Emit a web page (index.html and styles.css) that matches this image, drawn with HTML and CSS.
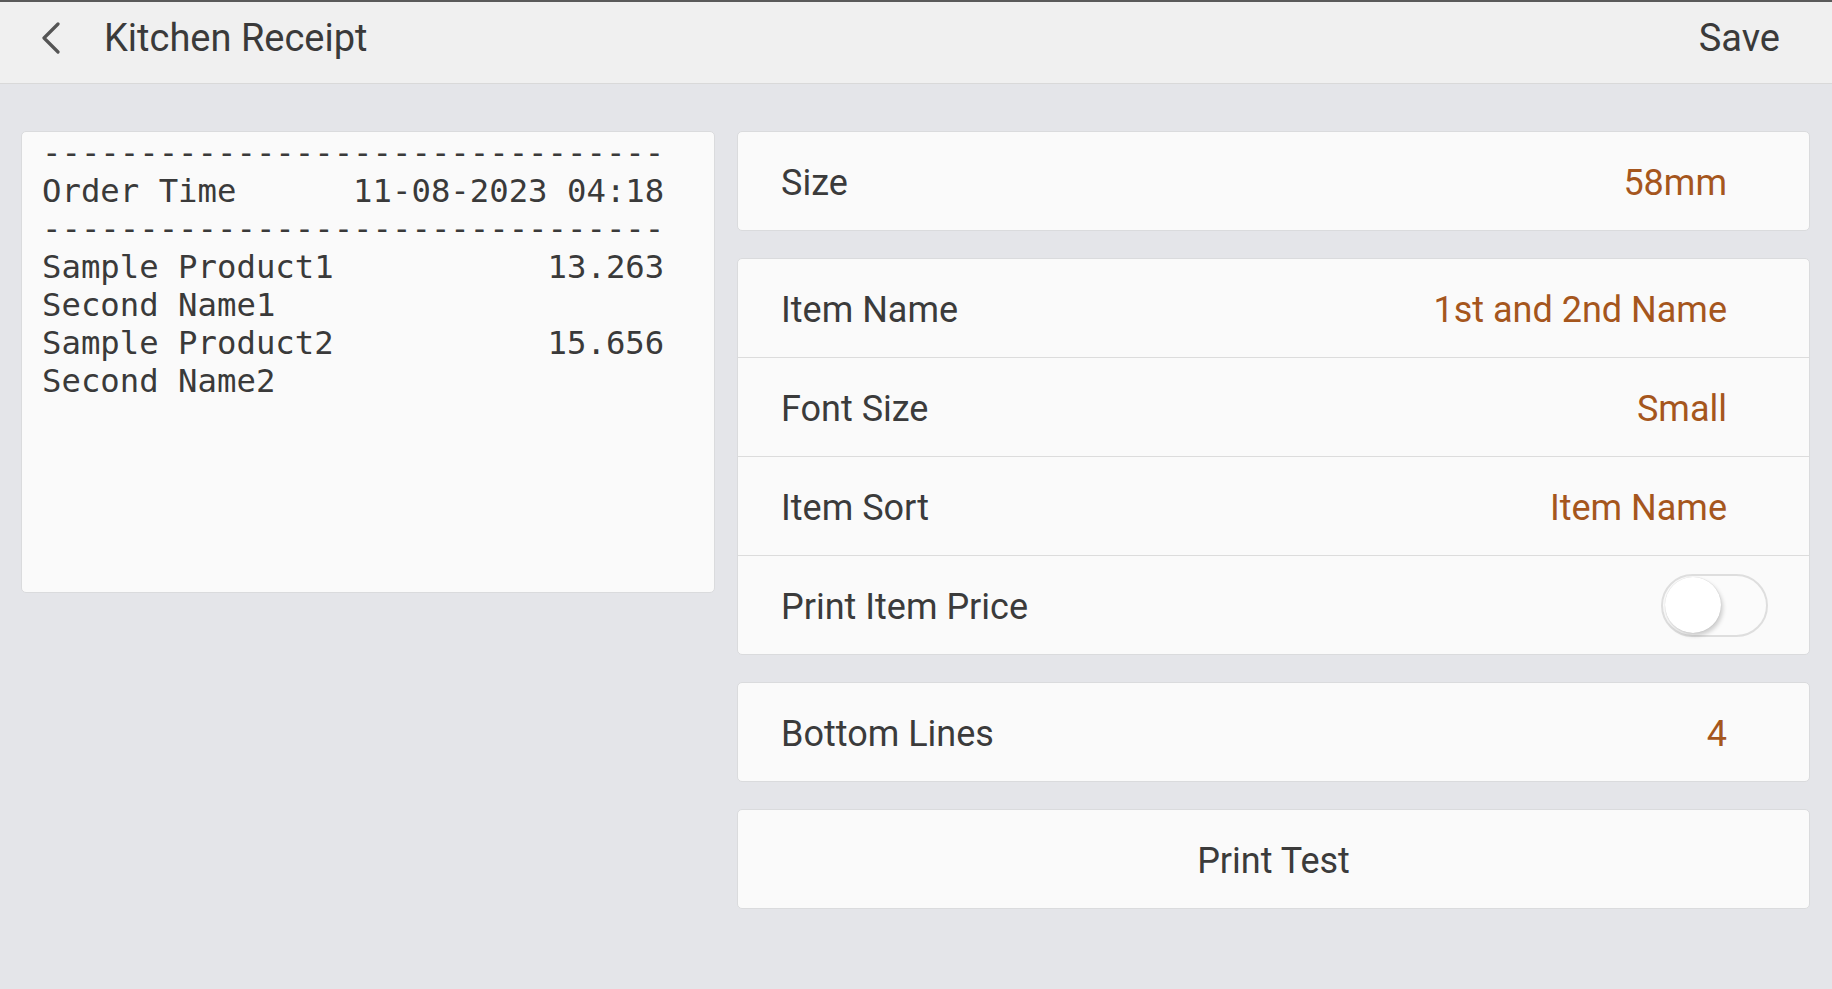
FILE: index.html
```html
<!DOCTYPE html>
<html>
  <head>
    <title>Kitchen Receipt</title>
    <link rel="stylesheet" href="styles.css">
  </head>
  <body>
    <div class="topbar">
      <div class="topbar-left">
        <svg class="back" width="20" height="32" viewBox="0 0 20 32">
          <path d="M17 2 L3 16 L17 30" fill="none" stroke="#555" stroke-width="3.2" stroke-linecap="round" stroke-linejoin="round"/>
        </svg>
        <span class="title">Kitchen Receipt</span>
      </div>
      <span class="save">Save</span>
    </div>

    <div class="content">
      <div class="preview">
<pre class="receipt">--------------------------------
Order Time      11-08-2023 04:18
--------------------------------
Sample Product1           13.263
Second Name1
Sample Product2           15.656
Second Name2</pre>
      </div>

      <div class="settings">
        <div class="card">
          <div class="row">
            <span class="label">Size</span>
            <span class="value">58mm</span>
          </div>
        </div>

        <div class="card">
          <div class="row">
            <span class="label">Item Name</span>
            <span class="value">1st and 2nd Name</span>
          </div>
          <div class="row">
            <span class="label">Font Size</span>
            <span class="value">Small</span>
          </div>
          <div class="row">
            <span class="label">Item Sort</span>
            <span class="value">Item Name</span>
          </div>
          <div class="row">
            <span class="label">Print Item Price</span>
            <span class="switch"><span class="knob"></span></span>
          </div>
        </div>

        <div class="card">
          <div class="row">
            <span class="label">Bottom Lines</span>
            <span class="value">4</span>
          </div>
        </div>

        <div class="card">
          <div class="row button-row">Print Test</div>
        </div>
      </div>
    </div>
  </body>
</html>
```

FILE: styles.css
```css
body {
  margin: 0;
  background-color: #e4e5e9;
  font-family: Roboto, "Noto Sans", sans-serif;
  color: #3b3b3b;
}

.topbar {
  height: 84px;
  box-sizing: border-box;
  display: flex;
  align-items: center;
  justify-content: space-between;
  background-color: #f0f0f0;
  border-top: 2px solid #5a5a5a;
  border-bottom: 1px solid #d9d9d9;
  padding: 0 52px 9px 41px;
}

.topbar-left {
  display: flex;
  align-items: center;
}

.back {
  margin-right: 43px;
}

.title,
.save {
  font-size: 38px;
  color: #3a3a3a;
}

.content {
  display: flex;
  gap: 22px;
  padding: 47px 22px 0 21px;
}

.preview {
  flex: 0 0 694px;
  height: 462px;
  box-sizing: border-box;
  background-color: #fafafa;
  border: 1px solid #dadbdd;
  border-radius: 5px;
  padding: 2px 20px;
}

.receipt {
  margin: 0;
  font-family: "DejaVu Sans Mono", "Liberation Mono", monospace;
  font-size: 32.3px;
  line-height: 38px;
  color: #3a3a3a;
}

.settings {
  flex: 1;
  display: flex;
  flex-direction: column;
  gap: 27px;
}

.card {
  background-color: #fafafa;
  border: 1px solid #dadbdd;
  border-radius: 5px;
}

.row {
  height: 98px;
  box-sizing: border-box;
  display: flex;
  align-items: center;
  justify-content: space-between;
  padding: 4px 82px 0 43px;
  font-size: 36px;
}

.row + .row {
  height: 99px;
  border-top: 1px solid #dcdcdc;
}

.value {
  color: #a5561d;
}

.switch {
  width: 107px;
  height: 63px;
  box-sizing: border-box;
  border: 2px solid #dedede;
  border-radius: 32px;
  background-color: #fbfbfb;
  margin-right: -41px;
  margin-top: -4px;
  display: flex;
  align-items: center;
  padding-left: 2px;
}

.knob {
  width: 56px;
  height: 56px;
  border-radius: 50%;
  background-color: #fff;
  box-shadow: 2px 3px 4px rgba(0, 0, 0, 0.18), 0 0 1px rgba(0, 0, 0, 0.2);
}

.button-row {
  justify-content: center;
  padding: 4px 0 0;
}
```
